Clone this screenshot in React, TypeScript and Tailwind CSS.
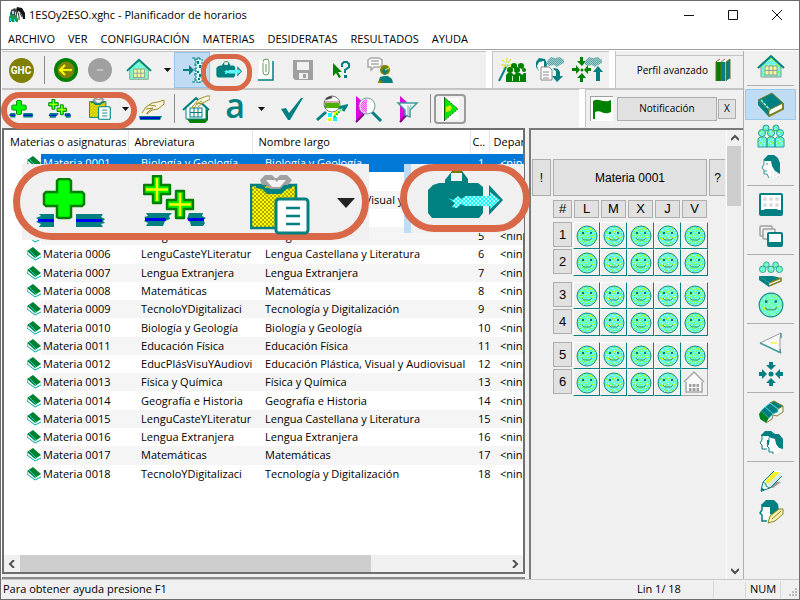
import type { ReactNode } from 'react';

interface IconProps {
  className?: string;
}

interface Subject {
  short: string;
  long: string;
}

const subjects: Subject[] = [
  { short: 'Biología y Geología', long: 'Biología y Geología' },
  { short: 'Educación Física', long: 'Educación Física' },
  { short: 'EducPlásVisuYAudiovi', long: 'Educación Plástica, Visual y Audiovisual' },
  { short: 'Física y Química', long: 'Física y Química' },
  { short: 'Geografía e Historia', long: 'Geografía e Historia' },
  { short: 'LenguCasteYLiteratur', long: 'Lengua Castellana y Literatura' },
  { short: 'Lengua Extranjera', long: 'Lengua Extranjera' },
  { short: 'Matemáticas', long: 'Matemáticas' },
  { short: 'TecnoloYDigitalizaci', long: 'Tecnología y Digitalización' },
];

const rows = [...subjects, ...subjects].map((subject, i) => ({
  ...subject,
  name: `Materia ${String(i + 1).padStart(4, '0')}`,
  num: i + 1,
}));

const menus = ['ARCHIVO', 'VER', 'CONFIGURACIÓN', 'MATERIAS', 'DESIDERATAS', 'RESULTADOS', 'AYUDA'];
const days = ['L', 'M', 'X', 'J', 'V'];
const hourBlocks = [[1, 2], [3, 4], [5, 6]];

// Dithered fills shared by all the icons
function Patterns() {
  return (
    <svg className="absolute h-0 w-0" aria-hidden="true">
      <defs>
        <pattern id="aqua" width="6" height="6" patternUnits="userSpaceOnUse">
          <rect width="6" height="6" fill="#66ffee" />
          <path d="M0 0h1v1H0zM2 2h1v1H2zM4 4h1v1H4zM4 0h1v1H4zM1 5h1v1H1zM5 2h1v1H5zM0 3h1v1H0zM3 0h1v2H3zM2 4h1v1H2z" fill="#7dfa52" />
          <path d="M1 1h1v1H1zM5 5h1v1H5zM3 3h1v1H3z" fill="#c4ffff" />
        </pattern>
        <pattern id="gold" width="4" height="4" patternUnits="userSpaceOnUse">
          <rect width="4" height="4" fill="#ffff00" />
          <path d="M0 0h2v2H0zM2 2h2v2H2z" fill="#b0a800" />
        </pattern>
        <pattern id="cyan" width="4" height="4" patternUnits="userSpaceOnUse">
          <rect width="4" height="4" fill="#00ffff" />
          <path d="M0 0h2v2H0zM2 2h2v2H2z" fill="#b8ffff" />
        </pattern>
        <pattern id="pink" width="2" height="2" patternUnits="userSpaceOnUse">
          <rect width="2" height="2" fill="#ffb0ff" />
          <path d="M0 0h1v1H0zM1 1h1v1H1z" fill="#ff50ff" />
        </pattern>
        <pattern id="mist" width="2" height="2" patternUnits="userSpaceOnUse">
          <rect width="2" height="2" fill="#9accca" />
          <path d="M0 0h1v1H0zM1 1h1v1H1z" fill="#5fa5a5" />
        </pattern>
      </defs>
    </svg>
  );
}

function Svg({ box = '0 0 32 32', className = 'size-8', children }: IconProps & { box?: string; children: ReactNode }) {
  return (
    <svg viewBox={box} className={`shrink-0 ${className}`} fill="none" aria-hidden="true">
      {children}
    </svg>
  );
}

function AppIcon() {
  return (
    <Svg box="0 0 18 18" className="size-[18px]">
      <path d="M2 6h8v9H2z" fill="#2a8a55" />
      <path d="M3 4l4-2 2 3v4H3z" fill="#444" />
      <path d="M4 5h2v3H4zM7 6h1v3H7z" fill="#bfc9ff" />
      <path d="M1 10l2 1v5H1zM4 11l3 2v3H4zM8 10l2 2v4H8z" fill="#1d9c4a" />
      <path d="M2 12h1v3H2zM6 13h1v3H6z" fill="#2ce6f5" />
      <path d="M9 1l5 1 3 5v6h-2l-1-4-3-3-3-2z" fill="#151515" />
      <path d="M9 5l3 1 2 4v5h-3l-2-4z" fill="#fff" />
      <path d="M9 4l2 6v4M12 7l2 4" stroke="#333" />
    </Svg>
  );
}

function PlusIcon({ className }: IconProps) {
  return (
    <Svg box="0 0 70 50" className={className}>
      <path d="M3 36h15v13H3l2-3-5-2 3-2-3-2 5-2zM40 36h27l-2 3 4 2-2 2 2 2-4 1 2 3H40z" fill="#008080" />
      <path d="M2 41h16v3H2zM40 41h26v3H40z" fill="#0000f0" />
      <path d="M23 1h10l2 2v11h11l2 2v10l-2 2H35v11l-2 1H23l-2-1V28H10l-2-2V16l2-2h11V3z" fill="#00ff00" stroke="#008000" strokeWidth="2.5" />
    </Svg>
  );
}

function PlusPlusIcon({ className }: IconProps) {
  return (
    <Svg box="0 0 64 52" className={className}>
      <path d="M3 38h26l-3 3 1 3-5 2-2 5H3l2-3-4-2 3-2-3-2 4-1zM46 38h14l-1 3 4 2-3 2 2 3-2 3H48l-1-4-3-3z" fill="#008080" />
      <path d="M2 43h21v3H2zM45 43h16v3H45z" fill="#0000f0" />
      {[0, 23].map((x) => (
        <g key={x} transform={`translate(${x} ${x ? 15 : 0})`}>
          <path d="M10 1h8v9h9v9h-9v9h-8v-9H1v-9h9z" fill="#00f000" stroke="#008000" strokeWidth="2.4" strokeLinejoin="round" />
          <path d="M14 3v23M3 14.500h22" stroke="#ffff00" strokeWidth="2.400" />
        </g>
      ))}
    </Svg>
  );
}

function ClipboardIcon({ className }: IconProps) {
  return (
    <Svg box="0 0 60 60" className={className}>
      <path d="M1 10h45v43H1z" fill="url(#gold)" stroke="#008080" strokeWidth="2.5" />
      <path d="M6 9h5l5 4h14l6-4h6v4l-5 1-6 5H17l-5-5-6-1z" fill="#008080" />
      <path d="M10 5l5-5h7l4 4 4-4h7l5 5-4 5h-4l-4 4H20l-4-4h-4z" fill="#a0a0a0" />
      <path d="M16 5h20l-6 7h-8z" fill="#f4f4f4" />
      <path d="M23 3h7l-3 4z" fill="#a0a0a0" />
      <rect x="26" y="24" width="32" height="34" rx="3" fill="#fff" stroke="#008080" strokeWidth="3" />
      <path d="M36 33h14M36 41h14M36 49h14" stroke="#008080" strokeWidth="2.400" />
    </Svg>
  );
}

function BriefcaseIcon({ className }: IconProps) {
  return (
    <Svg box="0 0 76 52" className={className}>
      <path d="M12 13h6v-3l7-9h10l6 8v4h10l5 4v26l-4 5H5l-4-5V20l5-5z" fill="#008080" />
      <path d="M24 3h11v8H24z" fill="#f2f2f2" />
      <path d="M25 1h9v2h-9z" fill="#6b8000" />
      <path d="M62 15l14 15-14 15z" fill="#008080" />
      <path d="M21 28l5 2 5-4 3 3 5-3h24v-4l10 8-10 9v-3H38l-4-2-4 4-5-1 3-4z" fill="url(#cyan)" />
    </Svg>
  );
}

function HouseIcon({ className = 'size-7', hand = false }: IconProps & { hand?: boolean }) {
  return (
    <Svg box="0 0 28 28" className={className}>
      {hand && <path d="M5 15l16-2 5 2v10l-3 3H8l-3-4z" fill="#008000" />}
      <path d="M4 13L14 4l10 9v11H4z" fill={hand ? '#fff' : 'url(#aqua)'} stroke={hand ? '#008080' : '#8a9a90'} />
      <path d="M1 15L14 3l13 12" stroke="#008080" strokeWidth="2" />
      <rect x="8" y="13" width="12" height="9" fill={hand ? '#fff' : '#e9ff9c'} stroke={hand ? '#008080' : '#999'} />
      <path d="M12 13v9M16 13v9M8 17.500h12" stroke={hand ? '#008080' : '#999'} />
      {hand && <path d="M10 12l7-8 8-3h3v3l-7 4-6 1-3 4zM14 9l6-3M16 12l5-4" fill="#fff9dd" stroke="#9a9128" />}
    </Svg>
  );
}

function HandIcon() {
  return (
    <Svg box="0 0 28 28" className="size-7">
      <path d="M2 21h23l-2 4H3z" fill="#008080" />
      <path d="M3 22h20v2H3z" fill="#0010d0" />
      <path d="M5 18l4-6 6-4 6-1 6-2v4l-6 5-6 1-5 4M9 14l7-1-4 3-3 3M12 10l7 1" fill="#f7f2e2" stroke="#9a9128" />
    </Svg>
  );
}

function BackIcon() {
  return (
    <Svg box="0 0 24 24" className="size-6">
      <circle cx="12" cy="12" r="12" fill="#008000" />
      <circle cx="12" cy="12" r="8.500" fill="#80800a" />
      <path d="M18 12H6M11 7l-5 5 5 5" stroke="#ffff00" strokeWidth="2" />
      <path d="M9 13h9" stroke="#a0c000" strokeDasharray="1 1" />
    </Svg>
  );
}

function ForwardIcon() {
  return (
    <Svg box="0 0 24 24" className="size-6">
      <circle cx="12" cy="12" r="12" fill="#a0a0a0" />
      <path d="M9 13l1-2 1 2 1-2 1 2 1-2 1 2" stroke="#ccc" />
    </Svg>
  );
}

function DockIcon() {
  return (
    <Svg box="0 0 36 32" className="h-8 w-9">
      <path d="M9 15h6v-4l5 5-5 5v-4H9z" fill="#008080" />
      <path d="M26 4h-9M26 28h-9M21 4v24" stroke="#008080" strokeDasharray="3 2" />
      <path d="M22 5h6v23h-6z" fill="#d9f5f5" stroke="#008080" strokeDasharray="2 1" />
      <path d="M23 7h2v3h-2zM25 11h2v3h-2zM23 17h2v2h-2zM25 20h2v3h-2zM24 24h2v2h-2z" fill="#008080" />
    </Svg>
  );
}

function ClipIcon() {
  return (
    <Svg box="0 0 24 28" className="h-7 w-6">
      <path d="M5 4h14v18l-2 2H4z" fill="#fff" />
      <path d="M19 5v19H4" stroke="#008080" strokeWidth="1.5" />
      <path d="M9 7v9a3 3 0 006 0V6a3 3 0 00-6 0M12 8v8" stroke="#5aa05a" />
    </Svg>
  );
}

function SaveIcon() {
  return (
    <Svg box="0 0 20 20" className="size-5">
      <path d="M0 0h20v20H2l-2-2z" fill="#a0a0a0" />
      <path d="M4 2h12v8H4zM6 13h9v6H6z" fill="#f0f0f0" />
      <path d="M10 14h3v4h-3z" fill="#a0a0a0" />
    </Svg>
  );
}

function HelpCursorIcon() {
  return (
    <Svg box="0 0 20 20" className="size-5">
      <path d="M2 3l9 9H7l3 5-2 1-3-5-3 3z" fill="#008000" />
      <path d="M11 7V4l2-2h3l2 2v3l-4 3v3" stroke="#008080" strokeWidth="2" />
      <path d="M13 15h3v3h-3z" fill="#008080" />
    </Svg>
  );
}

function TalkIcon() {
  return (
    <Svg box="0 0 28 28" className="size-7">
      <path d="M2 4l3-2h8l3 2v5l-3 2H8l-3 3V11H2zM5 5h8M5 8h8" fill="#fff" stroke="#a8a8a8" strokeWidth="1.500" />
      <circle cx="19" cy="14" r="5" fill="#808000" />
      <path d="M16 14l6-3v4l-4 4z" fill="#008080" />
      <path d="M12 27l2-6 4-1h4l4 3 1 4z" fill="#008080" />
      <path d="M12 27l2-4 3 4z" fill="#808000" />
      <path d="M19 14l4-2" stroke="#ffff40" />
    </Svg>
  );
}

function WandPeopleIcon() {
  return (
    <Svg box="0 0 28 26" className="h-[26px] w-7">
      <path d="M1 24L9 8" stroke="#008080" strokeWidth="2" />
      <path d="M9 1v11M4 3l10 8M3 8h12M13 2L5 12" stroke="#d5d500" />
      <path d="M6 5l6 3M10 3l-2 7" stroke="#bfffff" />
      <g fill="#008000">
        <circle cx="12" cy="13" r="3" /><circle cx="16" cy="9" r="3" /><circle cx="23" cy="9" r="3" /><circle cx="19" cy="13" r="3" /><circle cx="26" cy="13" r="2" />
        <path d="M8 18l2-2h4l2 2 2-2h4l2 2 2-2h2v9H8z" />
      </g>
      <path d="M14.500 19v5M21.500 19v5M15 11l1 2M22 11l1 2" stroke="#cfffcf" />
    </Svg>
  );
}

function CloudShape() {
  return <path d="M14 4l3-3 4 1 5-1 4 3v3l-4 2-3 2-3-2-5 1-3-3z" fill="url(#mist)" />;
}

function CloudDocIcon() {
  return (
    <Svg box="0 0 32 28" className="h-7 w-8">
      <path d="M2 6l3-4 6 1 2 5-1 7H5L2 11z" fill="#008080" />
      <path d="M5 6l5-1v8l-4 3-2-3-1-3z" fill="#fff" />
      <CloudShape />
      <path d="M7 11h8l3 3v10H7z" fill="#fff" stroke="#888" />
      <path d="M9 16h6M9 19h6M9 22h6" stroke="#888" />
      <path d="M20 12l4 1 2 3v4h3l-6 6-5-6h4v-5l-3-2z" fill="#008080" />
    </Svg>
  );
}

function CloudArrowsIcon() {
  return (
    <Svg box="0 0 32 28" className="h-7 w-8">
      <path d="M8 1h3v4h3l-4 5-5-5h3zM8 26h3v-4h3l-4-5-5 5h3zM0 12h4V9l4 5-4 4v-3H0zM19 12h-3V9l-4 5 4 4v-3h3z" fill="#008000" />
      <circle cx="10" cy="14" r="1.500" fill="#008000" />
      <CloudShape />
      <path d="M26 10l5 6h-3v9h-4v-9h-3z" fill="#008080" />
    </Svg>
  );
}

function BooksIcon() {
  return (
    <Svg box="0 0 16 24" className="h-6 w-4">
      <path d="M1 4l4-3h10l-1 20-4 2H1z" fill="#fff" />
      <path d="M1 4h5v19H1z" fill="#008000" />
      <path d="M6 4h4v19H6zM11 4l4-3v19l-4 3z" fill="#008080" />
      <path d="M1 4l4-3M6 4l4-3M11 4l4-3v20M1 4v19M6 4v19M11 4v19" stroke="#6e6e20" />
    </Svg>
  );
}

function CheckIcon() {
  return (
    <Svg box="0 0 22 22" className="size-[22px]">
      <path d="M0 11l5-1 3 5L20 0h2L9 22H7z" fill="#008080" />
    </Svg>
  );
}

function MagnifyGridIcon() {
  return (
    <Svg box="0 0 32 28" className="h-7 w-8">
      <path d="M12 13l18-3-3 8-8 9h-8z" fill="#fff" />
      <path d="M12 18h4v4h-4zM17 22h4v4h-4z" fill="#00ffff" />
      <path d="M18 16h4v4h-4zM12 23h4v3h-4z" fill="#e6ff00" />
      <path d="M1 25l9-8M22 13l8-2-3 5" stroke="#008080" strokeWidth="3" />
      <path d="M18 22l7-7" stroke="#00d000" strokeWidth="2" strokeDasharray="2 1" />
      <circle cx="16" cy="9" r="8" fill="#fff" stroke="#777" />
      <path d="M9 8h14v5H9z" fill="#4caf00" />
      <path d="M8 7h16" stroke="#a05a50" />
      <path d="M10 4l6-2" stroke="#444" strokeWidth="2" />
    </Svg>
  );
}

function MagnifyPinkIcon() {
  return (
    <Svg box="0 0 28 28" className="size-7">
      <path d="M1 1l7 6v14l-7 6z" fill="#e000e0" />
      <path d="M1 27l8-8" stroke="#800080" strokeWidth="2" />
      <path d="M17 17l9 9" stroke="#008080" strokeWidth="3" />
      <circle cx="12" cy="11" r="8" fill="#fff" stroke="#6ca0a0" />
      <path d="M12 4v14c-9-1-9-13 0-14z" fill="url(#pink)" />
    </Svg>
  );
}

function FilterIcon() {
  return (
    <Svg box="0 0 24 28" className="h-7 w-6">
      <path d="M4 1l9 8-2 12-7 6z" fill="#e000e0" />
      <path d="M4 27l7-8" stroke="#800080" strokeWidth="2" />
      <path d="M2 8h19l-7 7v7l-5-2v-5z" fill="#f4ffff" stroke="#3f9a9a" strokeWidth="1.5" />
      <path d="M12 10v10M15 10l-2 4" stroke="#80b0b0" />
    </Svg>
  );
}

function PlayIcon() {
  return (
    <Svg box="0 0 32 30" className="h-[30px] w-8">
      <rect x="1" y="1" width="30" height="28" rx="3" fill="#f0f0f0" stroke="#9a9a9a" strokeWidth="2" />
      <path d="M8 4h17v22H8z" fill="#fff" />
      <path d="M10 3l14 12-14 12z" fill="#00e800" />
      <path d="M10 3l14 12-14 12" stroke="#555" strokeDasharray="2 1" />
      <path d="M10.500 3v24" stroke="#007000" />
      <path d="M12 13l4-2 2 3-2 3-4 1z" fill="#d0f000" />
    </Svg>
  );
}

function FlagIcon() {
  return (
    <Svg box="0 0 22 24" className="h-6 w-[22px]">
      <path d="M2 4c6-4 10 3 18-1v12c-8 4-10-3-16 0v7H2z" fill="#008000" />
    </Svg>
  );
}

function BookIcon({ className = 'size-7' }: IconProps) {
  return (
    <Svg box="0 0 28 28" className={className}>
      <path d="M2 11l11 13 13-6v-5L15 3z" fill="#fff" />
      <path d="M1 9l14-7 11 10-14 7z" fill="#008080" />
      <path d="M1 9v5l11 12v-7z" fill="#008080" />
      <path d="M4 9l10 11" stroke="#80ffff" strokeWidth="1.5" strokeDasharray="3 1" />
      <path d="M12 25l14-7v-6" stroke="#808020" strokeWidth="2" />
      <path d="M12 19v7M1 9l14-7 11 10-14 7z" stroke="#7c7c28" />
    </Svg>
  );
}

function RowBookIcon() {
  return (
    <Svg box="0 0 14 14" className="size-[14px]">
      <path d="M0 5l8 9 6-4V7z" fill="#eaffff" />
      <path d="M0 4l6-4 8 7-6 4z" fill="#008030" />
      <path d="M0 5v2l8 6 6-3" stroke="#00a8a0" />
      <path d="M2 3l7 7" stroke="#00d8d8" />
    </Svg>
  );
}

function PeopleIcon({ className = 'h-6 w-7', bodies = true }: IconProps & { bodies?: boolean }) {
  return (
    <Svg box={bodies ? '0 0 28 24' : '0 0 28 13'} className={className}>
      <g fill="url(#aqua)" stroke="#2a9c96">
        <circle cx="9" cy="4" r="3" /><circle cx="19" cy="4" r="3" />
        <circle cx="5" cy="9" r="3.500" /><circle cx="14" cy="9" r="3.500" /><circle cx="23" cy="9" r="3.500" />
        {bodies && <path d="M1 23v-8l2-2h5l2 2v8zM10 23v-8l2-2h4l2 2v8zM18 23v-8l2-2h5l2 2v8z" />}
      </g>
    </Svg>
  );
}

function HeadIcon({ className = 'size-6' }: IconProps) {
  return (
    <Svg box="0 0 24 24" className={className}>
      <path d="M5 4l4-3h7l5 4v15l-5 3H9v-3H5v-4l-2-3 2-3z" fill="#fff" />
      <path d="M5 4l4-4h6l4 3 2 5v11l-5-3-3-5-1-5H5z" fill="#008080" />
      <path d="M5 4v5l-2 4 2 2v4h3l2 4M7 9h2M5 16h3" stroke="#3a9494" />
      <path d="M13 17v5M16 18v5M19 19v3" stroke="#ccc" strokeDasharray="1 1" />
    </Svg>
  );
}

function BoardIcon() {
  return (
    <Svg box="0 0 24 24" className="size-6">
      <rect x="1" y="1" width="22" height="21" rx="1" fill="#fff" stroke="#008080" strokeWidth="2" />
      <path d="M1 17h4l1-1h12l1 1h4v5H1z" fill="#008080" />
      <g fill="#ddd">
        <circle cx="6" cy="6" r="2" /><circle cx="12" cy="6" r="2" /><circle cx="18" cy="6" r="2" />
        <circle cx="6" cy="12" r="2" /><circle cx="12" cy="12" r="2" /><circle cx="18" cy="12" r="2" />
      </g>
    </Svg>
  );
}

function BoardsIcon() {
  return (
    <Svg box="0 0 24 22" className="h-[22px] w-6">
      <g fill="#f0f0f0" stroke="#a0a0a0" strokeWidth="1.500">
        <rect x="1" y="1" width="12" height="10" rx="1" />
        <rect x="4" y="4" width="12" height="10" rx="1" />
      </g>
      <rect x="9" y="8" width="14" height="13" rx="1" fill="#fff" stroke="#008080" strokeWidth="2" />
      <path d="M9 17h14v4H9z" fill="#008080" />
    </Svg>
  );
}

function SmileyIcon({ className = 'size-[22px]' }: IconProps) {
  return (
    <Svg box="0 0 22 22" className={className}>
      <circle cx="11" cy="11" r="10" fill="url(#aqua)" stroke="#168a88" />
      <path d="M7 7v2M15 7v2" stroke="#107070" strokeWidth="2" />
      <path d="M6 13l2 2h6l2-2" stroke="#3f8f5f" />
      <path d="M14 3h2v1h-2zM5 13h1v2H5zM16 12h2v1h-2zM11 6h1v1h-1z" fill="#e4ff00" />
    </Svg>
  );
}

function PeopleBookIcon() {
  return (
    <div className="flex flex-col items-center">
      <PeopleIcon bodies={false} className="h-3 w-[26px]" />
      <Svg box="0 0 24 14" className="h-[14px] w-6">
        <path d="M1 3l9 10 12-5V4z" fill="#fff" />
        <path d="M0 3h14l8 2-12 5z" fill="#008080" />
        <path d="M0 3v4l10 7v-4z" fill="#008080" />
        <path d="M10 13l12-5V5l-12 5" stroke="#808020" strokeWidth="1.5" />
      </Svg>
    </div>
  );
}

function TriangleIcon() {
  return (
    <Svg box="0 0 24 24" className="size-6">
      <path d="M22 2L1 12l21 10-1-5v-9z" fill="#f8f8f8" stroke="#999" />
      <path d="M22 2v5M1 12l21 10M21 18v4" stroke="#4aa0a0" strokeWidth="1.500" />
      <path d="M12 11h6v2h-6z" fill="#fff36a" />
    </Svg>
  );
}

function ConvergeIcon() {
  return (
    <Svg box="0 0 24 24" className="size-6">
      <circle cx="12" cy="12" r="2.500" fill="#008080" />
      <path d="M10 0h4v3h3l-5 5-5-5h3zM10 24h4v-3h3l-5-5-5 5h3zM0 10h3V7l5 5-5 5v-3H0zM24 10h-3V7l-5 5 5 5v-3h3z" fill="#008080" />
    </Svg>
  );
}

function BookStackIcon() {
  return (
    <Svg box="0 0 26 26" className="size-[26px]">
      <path d="M2 15l7-5V6l7-3 8 4v6l-8 3-9 8-6-4z" fill="#fff" />
      <path d="M12 4l4-2 9 5-5 3z" fill="#008080" stroke="#808020" />
      <path d="M7 8l5-4 8 6v3l-5 2z" fill="#008080" stroke="#60d8e0" />
      <path d="M3 12l4-4 8 7-4 4z" fill="#007a80" stroke="#30c8d0" />
      <path d="M1 15l2-3 8 7-3 5-6-4z" fill="#008020" />
      <path d="M8 24l6-4 1-4 4 1 6-4V7" stroke="#808030" />
    </Svg>
  );
}

function HeadsIcon() {
  return (
    <Svg box="0 0 26 24" className="h-6 w-[26px]">
      <path d="M3 4l4-3h6l4 3v9l-7 5H6v-3l-3-2 1-3z" fill="#fff" />
      <path d="M3 4l4-4h6l4 3v4l-6 1V5H3zM9 9h2v5H9z" fill="#008080" />
      <path d="M4 4v5l-2 3 2 2v4h5" stroke="#008080" />
      <path d="M11 6h7l5 5v9l-6 3h-5l-2-5 1-3z" fill="#fff" />
      <path d="M10 6l4-3h7l4 5v10l-4-1-3-4-1-5z" fill="#008080" />
      <path d="M11 7v4l-2 4 2 2v4h4v2" stroke="#008080" />
    </Svg>
  );
}

function PencilIcon() {
  return (
    <Svg box="0 0 24 24" className="size-6">
      <path d="M2 22l2-9L15 2h8v5L11 19z" fill="#fff" />
      <path d="M14 3h7L9 15l-3-2z" fill="#f4f028" />
      <path d="M11 19l4-6h7l-8 6z" fill="#999" />
      <path d="M9 15L22 3v5L11 19z" fill="#d8e8e8" />
      <path d="M2 22l2-9L15 2M2 22l9-3L23 7M4 13l3 2v2l4 2" stroke="#008080" />
      <path d="M2 23v-5l4 3z" fill="#008080" />
    </Svg>
  );
}

function HeadPencilIcon() {
  return (
    <Svg box="0 0 26 26" className="size-[26px]">
      <path d="M4 5l4-4h7l4 4v16l-6 3H7v-3H4v-4l-1-3 2-4z" fill="#fff" />
      <path d="M4 5l4-4h8l4 4 1 7-6 5-3-2V8H4z" fill="#008080" />
      <path d="M4 5v6l-2 3 2 2v6h5" stroke="#008080" strokeWidth="1.500" />
      <path d="M10 24l2-7 9-7h4v5l-8 7z" fill="#f6f3b0" stroke="#8a8420" />
      <path d="M14 20l9-8" stroke="#8a8420" />
    </Svg>
  );
}

function Caret() {
  return (
    <button aria-label="Más opciones" className="flex w-3 items-center justify-center pr-[2px]">
      <Svg box="0 0 7 4" className="h-1 w-[7px]"><path d="M0 0h7L3.500 4z" fill="#111" /></Svg>
    </button>
  );
}

function Tool({ label, className = 'w-[37px]', children }: { label: string; className?: string; children: ReactNode }) {
  return (
    <button aria-label={label} className={`flex h-full shrink-0 items-center justify-center ${className}`}>
      {children}
    </button>
  );
}

function ToolSeparator() {
  return (
    <div className="flex w-2 shrink-0 justify-center py-1">
      <div className="w-px bg-[#8c8c8c]" />
    </div>
  );
}

function TitleBar() {
  return (
    <header className="flex h-7 items-center pl-[7px]">
      <AppIcon />
      <h1 className="ml-[3px] flex-1 text-[11px]">1ESOy2ESO.xghc - Planificador de horarios</h1>
      <div className="flex">
        <button aria-label="Minimizar" className="flex w-11 items-center justify-center">
          <Svg box="0 0 10 10" className="size-[10px]"><path d="M0 5.500h10" stroke="#111" /></Svg>
        </button>
        <button aria-label="Maximizar" className="flex w-11 items-center justify-center">
          <Svg box="0 0 10 10" className="size-[10px]"><path d="M.5.5h9v9h-9z" stroke="#111" /></Svg>
        </button>
        <button aria-label="Cerrar" className="flex w-11 items-center justify-center">
          <Svg box="0 0 10 10" className="size-[10px]"><path d="M0 0l10 10M10 0L0 10" stroke="#111" /></Svg>
        </button>
      </div>
    </header>
  );
}

function TopToolbars() {
  return (
    <div className="flex h-[38px] gap-[6px] border-b border-[#c4c4c4]">
      <div className="flex flex-1 border-t border-[#c4c4c4] bg-[#f0f0f0]">
        <Tool label="GHC" className="w-[38px]">
          <span className="flex size-[25px] items-center justify-center rounded-full bg-[#808000] font-['Roboto',sans-serif] text-[10px] font-bold text-white">GHC</span>
        </Tool>
        <ToolSeparator />
        <Tool label="Atrás" className="w-9"><BackIcon /></Tool>
        <Tool label="Adelante" className="w-8"><ForwardIcon /></Tool>
        <Tool label="Inicio" className="w-[46px]"><HouseIcon className="size-[26px]" /></Tool>
        <Caret />
        <Tool label="Acoplar" className="w-9 border border-[#99c4ea] bg-[#c0dcf3]"><DockIcon /></Tool>
        <Tool label="Maletín"><BriefcaseIcon className="h-[18px] w-[26px]" /></Tool>
        <Tool label="Adjuntar"><ClipIcon /></Tool>
        <Tool label="Guardar"><SaveIcon /></Tool>
        <Tool label="Ayuda" className="w-[39px]"><HelpCursorIcon /></Tool>
        <Tool label="Asistencia" className="w-[39px]"><TalkIcon /></Tool>
      </div>
      <div className="flex w-[117px] border-t border-l border-[#c4c4c4] bg-[#f0f0f0]">
        <Tool label="Asistente de grupos" className="w-[38px]"><WandPeopleIcon /></Tool>
        <Tool label="Descargar" className="w-[38px]"><CloudDocIcon /></Tool>
        <Tool label="Subir" className="w-[38px]"><CloudArrowsIcon /></Tool>
      </div>
      <div className="flex w-[128px] border-l border-[#c4c4c4] bg-[#f0f0f0] pt-1">
        <button className="flex w-full items-center justify-end gap-[7px] border-t border-[#c4c4c4] pr-3 pb-1 text-[10px]">
          Perfil avanzado
          <BooksIcon />
        </button>
      </div>
    </div>
  );
}

function EditToolbars() {
  return (
    <div className="flex h-[38px] gap-[6px]">
      <div className="flex flex-1 border-t border-[#c4c4c4] bg-[#f0f0f0]">
        <Tool label="Añadir materia" className="w-[38px]"><PlusIcon className="h-[18px] w-[25px]" /></Tool>
        <Tool label="Añadir varias materias" className="w-[40px]"><PlusPlusIcon className="h-[19px] w-6" /></Tool>
        <Tool label="Pegar" className="w-[40px]"><ClipboardIcon className="size-[22px]" /></Tool>
        <Caret />
        <Tool label="Modificar" className="w-[38px]"><HandIcon /></Tool>
        <ToolSeparator />
        <Tool label="Editar centro" className="w-9"><HouseIcon hand /></Tool>
        <Tool label="Texto" className="w-[42px]">
          <span className="pb-2 text-[34px] leading-8 font-semibold text-[#008080]">a</span>
        </Tool>
        <Caret />
        <Tool label="Comprobar" className="w-[48px]"><CheckIcon /></Tool>
        <Tool label="Ver horario" className="w-8"><MagnifyGridIcon /></Tool>
        <Tool label="Buscar" className="w-[42px]"><MagnifyPinkIcon /></Tool>
        <Tool label="Filtrar" className="w-9"><FilterIcon /></Tool>
        <ToolSeparator />
        <Tool label="Ejecutar" className="w-8"><PlayIcon /></Tool>
      </div>
      <div className="flex w-[158px] items-center border-t border-l border-[#c4c4c4] bg-[#f0f0f0] pl-1">
        <div className="border-t border-l border-[#a0a0a0] bg-white"><FlagIcon /></div>
        <button className="ml-1 h-6 w-[100px] border border-[#adadad] bg-[#e1e1e1] text-[10px]">Notificación</button>
        <button className="ml-px h-5 w-[18px] border border-[#adadad] bg-[#e1e1e1] text-[10px]">X</button>
      </div>
    </div>
  );
}

function Chevron({ d, label, className }: { d: string; label: string; className: string }) {
  return (
    <button aria-label={label} className={`flex shrink-0 items-center justify-center ${className}`}>
      <Svg box="0 0 8 8" className="size-2"><path d={d} stroke="#505050" strokeWidth="2" /></Svg>
    </button>
  );
}

function SubjectList() {
  return (
    <section className="flex min-w-0 flex-1 flex-col border-2 border-[#6e6e6e] bg-white">
      <div className="min-h-0 flex-1 overflow-hidden">
        <table className="h-[353px] w-full table-fixed border-collapse text-left text-[11px] whitespace-nowrap">
          <colgroup>
            <col className="w-[37px]" />
            <col className="w-[87px]" />
            <col className="w-[124px]" />
            <col className="w-[218px]" />
            <col className="w-[19px]" />
            <col />
          </colgroup>
          <thead>
            <tr className="h-6 leading-4">
              <th colSpan={2} className="border-r border-[#e5e5e5] p-0 pl-[6px] font-normal">Materias o asignaturas</th>
              <th className="border-r border-[#e5e5e5] p-0 pl-[6px] font-normal">Abreviatura</th>
              <th className="border-r border-[#e5e5e5] p-0 pl-[6px] font-normal">Nombre largo</th>
              <th className="border-r border-[#e5e5e5] p-0 pl-[2px] font-normal">C..</th>
              <th className="p-0 pl-1 font-normal">Depar</th>
            </tr>
          </thead>
          <tbody>
            {rows.map((row) => {
              const color = row.num === 1 ? 'bg-[#0078d7] text-white' : row.num % 2 ? 'bg-[#f5f5f5]' : '';
              return (
                <tr key={row.num} className="leading-4">
                  <td className="p-0 pl-[23px]"><RowBookIcon /></td>
                  <td className={`p-0 pl-[2px] ${color}`}>{row.name}</td>
                  <td className={`p-0 pl-[13px] ${color}`}>{row.short}</td>
                  <td className={`p-0 pl-[13px] ${color}`}>{row.long}</td>
                  <td className={`p-0 pl-2 ${color}`}>{row.num}</td>
                  <td className={`p-0 pl-[11px] ${color}`}>&lt;nin</td>
                </tr>
              );
            })}
          </tbody>
        </table>
      </div>
      <div className="flex h-[17px] bg-[#f0f0f0]">
        <Chevron label="Desplazar a la izquierda" d="M6 0L2 4l4 4" className="w-4" />
        <div className="flex-1"><div className="h-full w-[72%] bg-[#cdcdcd]" /></div>
        <Chevron label="Desplazar a la derecha" d="M2 0l4 4-4 4" className="w-4" />
      </div>
    </section>
  );
}

const keyStyle = 'border border-[#adadad] bg-[#e1e1e1]';

function WeekPanel() {
  return (
    <section className="flex w-[214px] shrink-0 border-t-2 border-l-2 border-[#7a7a7a] bg-[#f0f0f0] font-['Liberation_Sans',Arial,sans-serif]">
      <div className="min-w-0 flex-1 overflow-hidden pt-[29px] pl-px">
        <div className="flex h-[37px] gap-[2px] text-xs">
          <button className={`w-[19px] shrink-0 ${keyStyle}`}>!</button>
          <button className={`w-[154px] shrink-0 ${keyStyle}`}>Materia 0001</button>
          <button className={`w-4 shrink-0 border-y border-l border-[#adadad] bg-[#e1e1e1]`}>?</button>
        </div>
        <div className="mt-1 ml-[21px] grid w-min grid-cols-[20px_repeat(5,27px)] text-[13px]">
          <div className={`mr-px h-[18px] text-center leading-4 ${keyStyle}`}>#</div>
          {days.map((day) => (
            <div key={day} className={`mx-px h-[18px] text-center leading-4 ${keyStyle}`}>{day}</div>
          ))}
        </div>
        {hourBlocks.map((hours) => (
          <div key={hours[0]} className="mt-1 mb-[6px] ml-[21px] grid w-min grid-cols-[20px_repeat(5,27px)] text-[13px]">
            {hours.map((hour) => (
              <div key={hour} className="contents">
                <div className={`mr-px mb-[2px] flex h-[25px] items-center justify-center ${keyStyle}`}>{hour}</div>
                {days.map((day) =>
                  hour === 6 && day === 'V' ? (
                    <button key={day} aria-label={`${day} ${hour}`} className="flex h-[27px] items-center justify-center border-r border-b border-[#a8a8a8]">
                      <Svg box="0 0 24 24" className="size-6">
                        <path d="M2 12L12 2l10 10M4 12v10h16V12" stroke="#a8a8a8" strokeWidth="1.500" fill="#fafafa" />
                        <path d="M7 14h10v7H7z" fill="#a0a0a0" />
                        <path d="M10 14v7M14 14v7M7 17.500h10" stroke="#fff" />
                      </Svg>
                    </button>
                  ) : (
                    <button key={day} aria-label={`${day} ${hour}`} className="flex h-[27px] items-center justify-center border border-t-white border-r-[#008080] border-b-[#008080] border-l-white">
                      <SmileyIcon className="size-[22px]" />
                    </button>
                  )
                )}
              </div>
            ))}
          </div>
        ))}
      </div>
      <div className="flex w-[17px] flex-col border-l border-white bg-[#f0f0f0]">
        <Chevron label="Desplazar arriba" d="M0 6l4-4 4 4" className="h-4" />
        <div className="flex-1"><div className="h-[60px] w-[14px] bg-[#cdcdcd]" /></div>
        <Chevron label="Desplazar abajo" d="M0 2l4 4 4-4" className="h-[17px]" />
      </div>
    </section>
  );
}

const sideGroups: { label: string; icon: ReactNode }[][] = [
  [{ label: 'Centro', icon: <HouseIcon /> }],
  [
    { label: 'Materias', icon: <BookIcon /> },
    { label: 'Grupos', icon: <PeopleIcon /> },
    { label: 'Profesores', icon: <HeadIcon /> },
  ],
  [
    { label: 'Aulas', icon: <BoardIcon /> },
    { label: 'Conjuntos de aulas', icon: <BoardsIcon /> },
  ],
  [
    { label: 'Clases', icon: <PeopleBookIcon /> },
    { label: 'Desideratas', icon: <SmileyIcon className="size-[26px]" /> },
  ],
  [
    { label: 'Reproducir', icon: <TriangleIcon /> },
    { label: 'Concentrar', icon: <ConvergeIcon /> },
  ],
  [
    { label: 'Departamentos', icon: <BookStackIcon /> },
    { label: 'Equipos', icon: <HeadsIcon /> },
  ],
  [
    { label: 'Editar', icon: <PencilIcon /> },
    { label: 'Editar profesor', icon: <HeadPencilIcon /> },
  ],
];

function SideBar() {
  return (
    <nav className="w-[56px] shrink-0 border-l border-[#b0b0b0] bg-[#f0f0f0] pr-[3px] pl-px">
      {sideGroups.map((group, i) => (
        <div key={group[0].label}>
          {i > 0 && (
            <div className="flex h-[7px] items-center px-[2px]"><div className="h-px w-full bg-[#b0b0b0]" /></div>
          )}
          {group.map((item) => (
            <button
              key={item.label}
              aria-label={item.label}
              className={`flex h-[31px] w-full items-center justify-center ${item.label === 'Materias' ? 'border border-[#99c9ef] bg-[#c0dcf3]' : ''}`}
            >
              {item.icon}
            </button>
          ))}
        </div>
      ))}
    </nav>
  );
}

function StatusBar() {
  return (
    <footer className="flex h-5 items-center border-t border-[#c8c8c8] bg-[#f0f0f0] text-[11px]">
      <span className="flex-1 pl-[2px]">Para obtener ayuda presione F1</span>
      <span className="w-[77px] border-r border-[#d8d8d8]">Lin 1/ 18</span>
      <span className="h-4 w-8 border-r border-[#d8d8d8]" />
      <span className="w-[35px] border-r border-[#d8d8d8] text-center">NUM</span>
      <Svg box="0 0 18 18" className="size-[18px]">
        <path d="M14 7h2v2h-2zM11 10h2v2h-2zM14 10h2v2h-2zM8 13h2v2H8zM11 13h2v2h-2zM14 13h2v2h-2z" fill="#bdbdbd" />
      </Svg>
    </footer>
  );
}

// Outlines and enlarged views laid over the window
function Callouts() {
  return (
    <div className="pointer-events-none absolute -inset-px">
      <div className="absolute top-[92px] left-px h-[37px] w-[136px] rounded-full border-[6px] border-[#d96848]" />
      <div className="absolute top-[54px] left-[201px] h-[37px] w-[51px] rounded-[17px] border-[5px] border-[#d96848]" />
      <div className="absolute top-[164px] left-[22px] h-[76px] w-[347px] bg-[#f0f0f0]" />
      <div className="absolute top-[164px] left-[13px] flex h-[76px] w-[356px] items-start rounded-full border-[7px] border-[#d96848] bg-[#f0f0f0] pt-1 pl-4">
        <PlusIcon className="mt-[3px] h-[50px] w-[70px]" />
        <PlusPlusIcon className="ml-[37px] h-[52px] w-16" />
        <ClipboardIcon className="ml-[43px] size-[60px]" />
        <Svg box="0 0 18 10" className="mt-[23px] ml-[27px] h-[10px] w-[18px]"><path d="M0 0h18L9 10z" fill="#222" /></Svg>
      </div>
      <div className="absolute top-[164px] left-[404px] h-[69px] w-[120px] border-l-[7px] border-[#bcdcf8] bg-[#f0f0f0]" />
      <div className="absolute top-[164px] left-[400px] flex h-[68px] w-[130px] items-center rounded-full border-[7px] border-[#d96848] bg-[#f0f0f0] pb-1 pl-5">
        <BriefcaseIcon className="h-[52px] w-[76px]" />
      </div>
    </div>
  );
}

export default function App() {
  return (
    <div className="relative flex h-screen min-h-[560px] flex-col border border-[#6b6b6b] bg-white font-['Open_Sans','Noto_Sans',sans-serif] text-black">
      <Patterns />
      <TitleBar />
      <nav className="flex h-5 items-center gap-[13px] pl-[7px] text-[11px]">
        {menus.map((menu) => (
          <button key={menu}>{menu}</button>
        ))}
      </nav>
      <div className="mb-px h-px bg-[#a0a0a0]" />
      <div className="flex min-h-0 flex-1">
        <div className="flex min-w-0 flex-1 flex-col pl-px">
          <TopToolbars />
          <EditToolbars />
          <main className="flex min-h-0 flex-1 gap-1 bg-[#f0f0f0] pt-px">
            <div className="flex min-w-0 flex-1 border-b-2 border-[#8a8a8a] pb-[3px]">
              <SubjectList />
            </div>
            <WeekPanel />
          </main>
        </div>
        <SideBar />
      </div>
      <StatusBar />
      <Callouts />
    </div>
  );
}
